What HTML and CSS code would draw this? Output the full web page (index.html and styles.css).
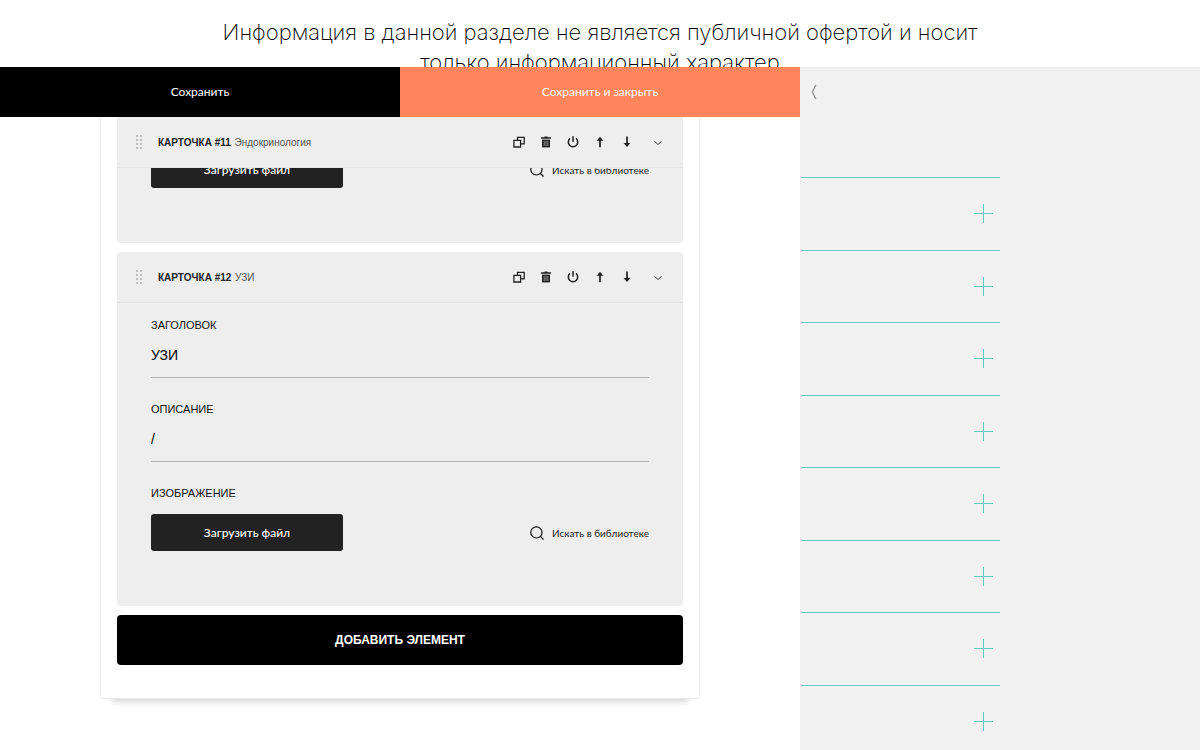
FILE: index.html
```
<!DOCTYPE html>
<html lang="ru">
<head>
  <meta charset="UTF-8">
  <meta name="viewport" content="width=device-width, initial-scale=1.0">
  <title>Редактор карточек</title>
  <link rel="stylesheet" href="styles.css">
</head>
<body>
  <svg class="sprite" aria-hidden="true">
    <symbol id="icon-drag" viewBox="0 0 8 16">
      <g fill="#b4b4b4">
        <circle cx="2" cy="2" r="1.1"/><circle cx="6" cy="2" r="1.1"/>
        <circle cx="2" cy="6" r="1.1"/><circle cx="6" cy="6" r="1.1"/>
        <circle cx="2" cy="10" r="1.1"/><circle cx="6" cy="10" r="1.1"/>
        <circle cx="2" cy="14" r="1.1"/><circle cx="6" cy="14" r="1.1"/>
      </g>
    </symbol>
    <symbol id="icon-copy" viewBox="0 0 12 12">
      <path d="M4.5 4V1.3h6.7v6.5H8M.9 4.3h6.7v6.7H.9z" fill="none" stroke="#222" stroke-width="1.3"/>
    </symbol>
    <symbol id="icon-trash" viewBox="0 0 12 12">
      <path d="M1 1.2h3.4V.4h3.2v.8H11v1.5H1z" fill="#222"/>
      <path d="M2 3.6h8v7.8H2z" fill="#222"/>
      <path d="M4.2 4.8v5.2M6 4.8v5.2M7.8 4.8v5.2" stroke="#999" stroke-width=".9"/>
    </symbol>
    <symbol id="icon-power" viewBox="0 0 12 12">
      <path d="M3 2.4a4.7 4.7 0 1 0 6 0M6 .2v5.6" fill="none" stroke="#222" stroke-width="1.5"/>
    </symbol>
    <symbol id="icon-up" viewBox="0 0 12 12">
      <path d="M6 11.2V2" fill="none" stroke="#222" stroke-width="1.7"/>
      <path d="M2.6 4.8L6 .7l3.4 4.1z" fill="#222"/>
    </symbol>
    <symbol id="icon-down" viewBox="0 0 12 12">
      <path d="M6 .6V10" fill="none" stroke="#222" stroke-width="1.7"/>
      <path d="M2.6 7L6 11.1 9.4 7z" fill="#222"/>
    </symbol>
    <symbol id="icon-chevron" viewBox="0 0 12 12">
      <path d="M2.6 5.2L6 8.6l3.4-3.4" fill="none" stroke="#333" stroke-width="1"/>
    </symbol>
    <symbol id="icon-search" viewBox="0 0 14 14">
      <circle cx="6.4" cy="6.4" r="5.6" fill="none" stroke="#111" stroke-width="1.2"/>
      <path d="M10.4 10.4l3.1 3.1" stroke="#111" stroke-width="1.3"/>
    </symbol>
  </svg>

  <header class="notice">
    <p>Информация в данной разделе не является публичной офертой и носит только информационный характер</p>
  </header>

  <div class="workspace">
    <main class="editor">
      <div class="toolbar">
        <button type="button" class="save">Сохранить</button>
        <button type="button" class="save-close">Сохранить и закрыть</button>
      </div>

      <form class="sheet">
        <section class="card card-scrolled">
          <div class="card-head">
            <svg class="drag"><use href="#icon-drag"/></svg>
            <h2><b>КАРТОЧКА #11</b> Эндокринология</h2>
            <div class="actions">
              <button type="button" aria-label="Копировать"><svg><use href="#icon-copy"/></svg></button>
              <button type="button" aria-label="Удалить"><svg><use href="#icon-trash"/></svg></button>
              <button type="button" aria-label="Отключить"><svg><use href="#icon-power"/></svg></button>
              <button type="button" aria-label="Выше"><svg><use href="#icon-up"/></svg></button>
              <button type="button" aria-label="Ниже"><svg><use href="#icon-down"/></svg></button>
              <button type="button" class="toggle" aria-label="Свернуть"><svg><use href="#icon-chevron"/></svg></button>
            </div>
          </div>
          <div class="card-body">
            <div class="upload-row">
              <button type="button" class="upload">Загрузить файл</button>
              <a href="#" class="library"><svg><use href="#icon-search"/></svg>Искать в библиотеке</a>
            </div>
          </div>
        </section>

        <section class="card">
          <div class="card-head">
            <svg class="drag"><use href="#icon-drag"/></svg>
            <h2><b>КАРТОЧКА #12</b> УЗИ</h2>
            <div class="actions">
              <button type="button" aria-label="Копировать"><svg><use href="#icon-copy"/></svg></button>
              <button type="button" aria-label="Удалить"><svg><use href="#icon-trash"/></svg></button>
              <button type="button" aria-label="Отключить"><svg><use href="#icon-power"/></svg></button>
              <button type="button" aria-label="Выше"><svg><use href="#icon-up"/></svg></button>
              <button type="button" aria-label="Ниже"><svg><use href="#icon-down"/></svg></button>
              <button type="button" class="toggle" aria-label="Свернуть"><svg><use href="#icon-chevron"/></svg></button>
            </div>
          </div>
          <div class="card-body">
            <div class="field">
              <label for="title12">ЗАГОЛОВОК</label>
              <input type="text" id="title12" value="УЗИ">
            </div>
            <div class="field">
              <label for="descr12">ОПИСАНИЕ</label>
              <input type="text" id="descr12" value="/">
            </div>
            <label for="upload12">ИЗОБРАЖЕНИЕ</label>
            <div class="upload-row">
              <button type="button" class="upload" id="upload12">Загрузить файл</button>
              <a href="#" class="library"><svg><use href="#icon-search"/></svg>Искать в библиотеке</a>
            </div>
          </div>
        </section>

        <button type="button" class="add">ДОБАВИТЬ ЭЛЕМЕНТ</button>
      </form>
    </main>

    <aside class="side">
      <button type="button" class="back" aria-label="Назад">
        <svg viewBox="0 0 6 16"><path d="M4.8 1L1.4 8l3.4 7" fill="none" stroke="#999" stroke-width="1.5"/></svg>
      </button>
      <ul class="sections">
        <li><button type="button" aria-label="Раскрыть"></button></li>
        <li><button type="button" aria-label="Раскрыть"></button></li>
        <li><button type="button" aria-label="Раскрыть"></button></li>
        <li><button type="button" aria-label="Раскрыть"></button></li>
        <li><button type="button" aria-label="Раскрыть"></button></li>
        <li><button type="button" aria-label="Раскрыть"></button></li>
        <li><button type="button" aria-label="Раскрыть"></button></li>
        <li><button type="button" aria-label="Раскрыть"></button></li>
      </ul>
    </aside>
  </div>
</body>
</html>
```
FILE: styles.css
```
* {
  box-sizing: border-box;
}
body {
  margin: 0;
  height: 100vh;
  display: flex;
  flex-direction: column;
  overflow: hidden;
  background: #fff;
  color: #111;
  font-family: "Liberation Sans", Arial, sans-serif;
}
button {
  padding: 0;
  border: none;
  background: none;
  cursor: pointer;
}
.sprite {
  display: none;
}
.notice {
  flex: none;
  height: 67px;
  padding: 17px 200px 0;
  overflow: hidden;
  text-align: center;
}
.notice p {
  margin: 0;
  font: 200 22px/30px Inter, sans-serif;
  color: #000;
}
.workspace {
  flex: 1;
  min-height: 0;
  display: grid;
  grid-template-columns: 2fr 1fr;
}
.toolbar {
  display: grid;
  grid-template-columns: 1fr 1fr;
  height: 50px;
}
.toolbar button {
  padding-bottom: 2px;
  font: 12px Lato, sans-serif;
  color: #fff;
}
.toolbar .save {
  background: #000;
}
.toolbar .save-close {
  background: #ff855d;
}

/* sheet with cards */
.sheet {
  margin: 0 100px;
  padding: 0 16px 33px;
  border: 1px solid #ebebeb;
  border-top: none;
  border-radius: 0 0 4px 4px;
  box-shadow: 0 13px 8px -12px rgba(0, 0, 0, 0.25);
}
.card {
  margin-bottom: 9px;
  border-radius: 4px;
  background: #eee;
}
.card-head {
  display: flex;
  align-items: center;
  height: 51px;
  padding: 0 19px 0 18px;
  border-bottom: 1px solid #e4e4e4;
}
.drag {
  width: 8px;
  height: 16px;
}
.card-head h2 {
  flex: 1;
  margin: 0 0 0 15px;
  font-size: 10px;
  font-weight: 400;
  color: #555;
}
.card-head b {
  margin-right: 1px;
  color: #222;
}
.actions {
  display: flex;
  gap: 15px;
}
.actions button,
.actions svg {
  display: block;
  width: 12px;
  height: 12px;
}
.actions .toggle {
  margin-left: 4px;
}
.card-body {
  padding: 15px 34px 55px;
}
.card-scrolled {
  border-radius: 0 0 4px 4px;
}
.card-scrolled .card-body {
  display: flex;
  flex-direction: column;
  justify-content: flex-end;
  height: 75px;
  overflow: hidden;
}
.card-body label {
  display: block;
  font-size: 11px;
  line-height: 14px;
}
.field {
  margin-bottom: 24px;
}
.field input {
  display: block;
  width: 100%;
  height: 46px;
  padding: 0;
  border: none;
  border-bottom: 1px solid #b5b5b5;
  background: none;
  font: 14px "Liberation Sans", Arial, sans-serif;
  color: #000;
}
.upload-row {
  display: flex;
  align-items: center;
  justify-content: space-between;
}
label + .upload-row {
  margin-top: 14px;
}
.upload {
  width: 192px;
  height: 37px;
  border-radius: 3px;
  background: #222;
  color: #fff;
  font: 500 12px Lato, sans-serif;
}
.library {
  display: flex;
  align-items: center;
  gap: 8px;
  color: #222;
  font: 10px Lato, sans-serif;
  text-decoration: none;
}
.library svg {
  width: 14px;
  height: 14px;
}
.add {
  display: block;
  width: 100%;
  height: 50px;
  border-radius: 4px;
  background: #000;
  color: #fff;
  font: bold 12px "Liberation Sans", Arial, sans-serif;
}

/* right panel */
.side {
  overflow: hidden;
  background: #f1f1f1;
}
.back {
  display: block;
  margin: 17px 0 0 11px;
}
.back svg {
  display: block;
  width: 6px;
  height: 16px;
}
.sections {
  display: grid;
  grid-auto-rows: 1fr;
  width: 50%;
  height: 580px;
  margin: 77px 0 0;
  padding: 0 0 0 1px;
  list-style: none;
}
.sections li {
  display: flex;
  align-items: center;
  justify-content: flex-end;
  padding-right: 7px;
  border-top: 1px solid #62cdbb;
}
.sections button {
  width: 19px;
  height: 19px;
  background:
    linear-gradient(#62cdbb, #62cdbb) center / 1px 100% no-repeat,
    linear-gradient(#62cdbb, #62cdbb) center / 100% 1px no-repeat;
}
```
